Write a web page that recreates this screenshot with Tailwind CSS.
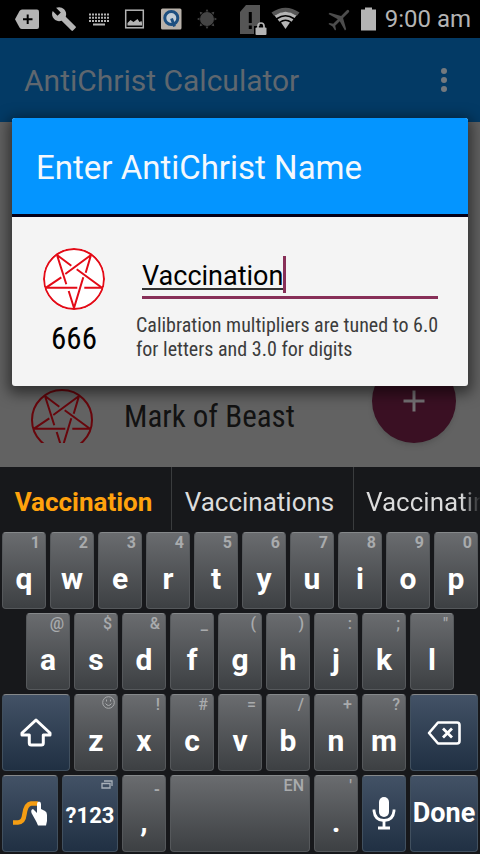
<!DOCTYPE html>
<html lang="en">
<head>
<meta charset="utf-8">
<meta name="viewport" content="width=device-width, initial-scale=1">
<title>AntiChrist Calculator</title>
<script src="https://cdn.jsdelivr.net/npm/@tailwindcss/browser@4"></script>
</head>
<body class="bg-[#626262] font-[Roboto,sans-serif]">
<svg class="hidden" aria-hidden="true">
  <symbol id="star" viewBox="0 0 62 62">
    <g fill="none" stroke="currentColor" stroke-width="2">
      <circle cx="31" cy="31" r="30"/>
      <path d="M14 7L23.300 36.300M25.700 43L31 60L40.300 29.300M42.700 24.700L48 7L22.300 26M18.300 29.300L3 39.700H34.300M41.300 39.700H59L33.700 21.300M28.300 17.700L14 7" stroke-linejoin="round"/>
    </g>
  </symbol>
</svg>
<div class="relative flex min-h-screen flex-col">
  <div class="flex h-[38px] items-center bg-black px-[9px] text-[#b4b4b4]">
    <div class="flex flex-1 items-center gap-3">
      <svg class="h-6 w-[30px] shrink-0" viewBox="0 0 30 24"><path d="M13 2.500H28Q30 2.500 30 4.500V20Q30 22 28 22H13Q11.500 22 10.500 20.500L6 12.300L10.500 4Q11.500 2.500 13 2.500Z" fill="currentColor"/><path d="M18.700 7.500v9.500M14 12.300h9.500" stroke="#000" stroke-width="2"/></svg>
      <svg class="h-[26px] w-[26px] shrink-0" viewBox="0 0 24 24"><path fill="currentColor" d="M22.700 19l-9.100-9.100c.9-2.300.4-5-1.500-6.900-2-2-5-2.400-7.400-1.300L9 6 6 9 1.600 4.700C.4 7.100.9 10.100 2.900 12.100c1.900 1.900 4.600 2.400 6.900 1.500l9.100 9.100c.4.400 1 .4 1.400 0l2.300-2.300c.5-.4.5-1.100.1-1.400z"/></svg>
      <svg class="-ml-px h-6 w-6 shrink-0" viewBox="0 0 24 24"><path d="M1 7.500H22M1 10.800H22M1 14H22" stroke="currentColor" stroke-width="2" stroke-dasharray="2 1"/><path d="M5 17.500H17" stroke="currentColor" stroke-width="2"/></svg>
      <svg class="h-6 w-6 shrink-0" viewBox="0 0 24 24"><rect x="1.700" y="3.200" width="17.600" height="17.600" fill="none" stroke="currentColor" stroke-width="1.500"/><path fill="currentColor" d="M3.500 18.500V16l3-3 3 2 4-3 2 3 2-1 .5 2v2.500z"/></svg>
      <svg class="h-6 w-6 shrink-0" viewBox="0 0 24 24"><rect x="1" y="1.500" width="20.500" height="21" rx="1.500" fill="#b8b1aa"/><circle cx="11.300" cy="11" r="6.500" fill="#c3cdd6" stroke="#1d4f80" stroke-width="3"/><path d="M11.500 11.500L14.500 19.500" stroke="#1d4f80" stroke-width="3"/></svg>
      <svg class="h-6 w-6 shrink-0" viewBox="0 0 24 24" fill="#444"><circle cx="11" cy="12" r="7"/><path d="M11 2l1.500 2.500h-3zM11 22l1.500-2.500h-3zM1 12l2.500-1.500v3zM21 12l-2.500-1.500v3zM3.700 4.700l3 .7-2.300 2.300zM18.300 4.700l-3 .7 2.300 2.300zM3.700 19.300l3-.7-2.300-2.300zM18.300 19.300l-3-.7 2.300-2.300z"/></svg>
    </div>
    <div class="flex items-center">
      <svg class="h-8 w-[28px]" viewBox="0 0 28 32"><path d="M1 9L7 2H21V31H1Z" fill="#555"/><path d="M11.300 9V20M11.300 22.500V26" stroke="#000" stroke-width="3"/><rect x="15" y="23" width="13" height="9" fill="#000"/><rect x="16.500" y="24.500" width="11" height="7.500" rx="1" fill="#b4b4b4"/><path d="M19 25V23a3 3 0 0 1 6 0v2" fill="none" stroke="#b4b4b4" stroke-width="1.700"/></svg>
      <svg class="ml-1 h-6 w-[29px]" viewBox="0 0 29 24"><path d="M0.500 5.500Q14.500-4 28.500 5.500L25.800 9Q14.500 1.500 3.200 9Z" fill="#555"/><g fill="none" stroke="currentColor" stroke-width="3"><path d="M4.500 9.800Q14.500 3 24.500 9.800M7.500 13.500Q14.500 8.500 21.500 13.500"/></g><path d="M10 15.500Q14.500 12.500 19 15.500L14.500 22Z" fill="currentColor"/></svg>
      <svg class="mr-[6px] ml-[26px] h-7 w-7" viewBox="0 0 24 24" fill="#4c4c4c"><path transform="rotate(45 12 12)" d="M22 16v-1.500l-8.800-5V2.500a1.200 1.200 0 0 0-2.400 0V9.500L2 14.500v1.500l8.800-2.500V19L8 20.800V22l4-1 4 1v-1.200L13.200 19v-5.500z"/></svg>
      <svg class="h-6 w-[17px]" viewBox="0 0 17 24"><path d="M1 2.500H5V0.500H12V2.500H16V23.500H1Z" fill="currentColor"/></svg>
      <span class="ml-2 text-[24px] leading-none">9:00 am</span>
    </div>
  </div>
  <header class="flex h-[84px] items-center justify-between bg-[#033a65] pr-[33px] pl-6 text-[#5f676f]">
    <h1 class="text-[30px]">AntiChrist Calculator</h1>
    <button aria-label="More options"><svg class="h-[26px] w-[6px]" viewBox="0 0 6 26" fill="#74797e"><circle cx="3" cy="4" r="3"/><circle cx="3" cy="13" r="3"/><circle cx="3" cy="22" r="3"/></svg></button>
  </header>
  <main class="flex flex-1 flex-col justify-end pb-6">
    <div class="flex h-[55px] items-start overflow-hidden pl-[31px]">
      <svg class="mt-[1px] h-[62px] w-[62px] shrink-0 text-[#68060c]"><use href="#star"/></svg>
      <p class="ml-[31px] pt-[9px] font-['Roboto_Condensed','Liberation_Sans_Narrow',sans-serif] text-[31px] leading-[40px] text-[#121212]">Mark of Beast</p>
    </div>
    <button aria-label="Add" class="absolute top-[359px] right-6 flex size-[84px] items-center justify-center rounded-full bg-[#3a1023] shadow-md"><svg class="h-6 w-6" viewBox="0 0 24 24"><path d="M12 1.500V22.500M1.500 12H22.500" stroke="#737073" stroke-width="3"/></svg></button>
  </main>
  <section role="dialog" aria-label="Enter AntiChrist Name" class="absolute inset-x-3 top-[118px] overflow-hidden rounded-[3px] bg-[#f4f4f4] shadow-[0_4px_14px_4px_rgba(0,0,0,0.5)]">
    <h2 class="flex h-[99px] items-center border-b-[3px] border-[#050018] bg-[#0495ff] pt-1 pl-6 text-[33px] text-[#f4f8fc]">Enter AntiChrist Name</h2>
    <div class="flex h-[169px] pt-[31px] pr-[30px] pl-[31px]">
      <div class="flex w-[62px] shrink-0 flex-col items-center">
        <svg class="h-[62px] w-[62px] rounded-full bg-white text-[#e30b17]"><use href="#star"/></svg>
        <output class="mt-[9px] font-['Roboto_Condensed','Liberation_Sans_Narrow',sans-serif] text-[31px] leading-[40px] text-black">666</output>
      </div>
      <div class="ml-[31px] min-w-0 flex-1">
        <label class="ml-[6px] flex h-[51px] items-center border-b-[3px] border-[#882f58] pt-1" aria-label="Name">
          <input type="text" value="Vaccination" class="field-sizing-content p-0 pt-1 text-[27px] text-black underline decoration-[#333] decoration-2 underline-offset-3 outline-none">
          <span class="h-[37px] w-[3px] bg-[#882f58]"></span>
        </label>
        <p class="mt-[14px] font-['Roboto_Condensed','Liberation_Sans_Narrow',sans-serif] text-[20px] leading-6 whitespace-nowrap text-[#3c3c3c]">Calibration multipliers are tuned to 6.0<br>for letters and 3.0 for digits</p>
      </div>
    </div>
  </section>
  <div id="keyboard" class="bg-[#17181b] pb-[2px] text-white">
    <div class="flex h-[63px] overflow-hidden text-[26px] text-[#dcdcdc]">
      <button class="w-[172px] shrink-0 border-r border-[#3a3c3e] pt-2 pr-1 font-bold text-[#ffa20d]">Vaccination</button>
      <button class="w-[182px] shrink-0 border-r border-[#3a3c3e] pt-2 pr-[6px]">Vaccinations</button>
      <button class="flex-1 overflow-hidden bg-linear-to-r from-[#dcdcdc] from-85% to-[#202124] bg-clip-text pt-2 pl-3 text-left whitespace-nowrap text-transparent">Vaccinating</button>
    </div>
    <div id="rows" class="flex flex-col gap-1 pt-[2px]"></div>
  </div>
</div>
<script>
const base = "relative mx-[2px] h-[77px] rounded-[4px] border border-t-[#85888a] font-bold ";
const grey = "border-[#55585b] bg-linear-to-b from-[#6a6c6f] to-[#3d4043] ";
const blue = "border-[#41505f] bg-linear-to-b from-[#435266] to-[#203043] ";
const spans = {4: "col-span-4", 5: "col-span-5", 6: "col-span-6", 12: "col-span-12"};
const hintStyle = hint => /^\d$/.test(hint) ? "top-[1px] font-bold" : hint === "-" ? "top-[5px] font-bold" : "top-[1px] font-medium";
const key = (label, hint = "", span = 4) => `<button class="${base}${grey}${spans[span]} pt-[17px] text-[30px] leading-none">${label}<span class="absolute right-[5px] text-[16px] leading-[18px] text-[#a9abad] ${hintStyle(hint)}">${hint}</span></button>`;
const special = (name, body, span) => `<button aria-label="${name}" class="${base}${blue}${spans[span]} flex items-center justify-center">${body}</button>`;
const row = items => `<div class="grid grid-cols-40">${items.join("")}</div>`;
const smile = `<svg class="-mr-[3px] h-[13px] w-[13px]" viewBox="0 0 13 13" fill="none" stroke="#a9abad"><circle cx="6.500" cy="6.500" r="5.800"/><path d="M3.500 7.500Q6.500 11.500 9.500 7.500M4.500 3.500v2M8.500 3.500v2"/></svg>`;
const shift = `<svg class="h-[30px] w-8" viewBox="0 0 32 30"><path d="M16 2L30 15V17H23.300V25Q23.300 27 21.300 27H11.300Q9.300 27 9.300 25V17H2V15Z" fill="none" stroke="#fff" stroke-width="3" stroke-linejoin="round"/></svg>`;
const back = `<svg class="h-6 w-[34px]" viewBox="0 0 34 24"><path d="M11 1.500H30Q32.500 1.500 32.500 4V20Q32.500 22.500 30 22.500H11L2 12Z" fill="none" stroke="#fff" stroke-width="2.600" stroke-linejoin="round"/><path d="M16 7.500L25 16.500M25 7.500L16 16.500" stroke="#fff" stroke-width="2.800"/></svg>`;
const swype = `<svg class="h-7 w-9" viewBox="0 0 36 28"><path d="M1 22.500H6Q11.500 22.500 12.500 14Q14 4 19 3.500H26" fill="none" stroke="#f59d13" stroke-width="4.600"/><path d="M25 4Q25 1.500 27 1.500Q29 1.500 29 4V9L33 11Q35 12 35 15V21L34 25.500H26L24.500 22L19.500 13Q18.500 9.500 21 9L25 13Z" fill="#fff"/></svg>`;
const mic = `<svg class="h-[34px] w-6" viewBox="0 0 24 34"><rect x="7" y="0" width="10" height="20" rx="5" fill="#fff"/><path d="M2 12.500V14Q3 23.500 12 23.500T22 14V12.500M12 23V30M6 31H18" fill="none" stroke="#fff" stroke-width="2.800"/></svg>`;
const win = `<svg class="absolute top-1 right-1 h-[9px] w-3" viewBox="0 0 12 9" fill="none" stroke="#a9b1ba" stroke-width="1.300"><path d="M1 3.500H9V8H1ZM3 1H11V6"/></svg>`;
const pairs = (letters, hints) => [...letters].map((c, i) => key(c, hints[i]));
document.getElementById("rows").innerHTML =
  row(pairs("qwertyuiop", "1234567890")) +
  row([`<span class="col-span-2"></span>`, ...pairs("asdfghjkl", ["@", "$", "&amp;", "_", "(", ")", ":", ";", '"'])]) +
  row([special("Shift", shift, 6), ...pairs("zxcvbnm", [smile, "!", "#", "=", "/", "+", "?"]), special("Backspace", back, 6)]) +
  row([special("Swype", swype, 5), special("Symbols", `<span class="pt-1 text-[22px]">?123</span>${win}`, 5), key(",", "-"), key("", "EN", 12), key(".", "'"), special("Voice input", mic, 4), special("Done", `<span class="text-[27px]">Done</span>`, 6)]);
</script>
</body>
</html>
